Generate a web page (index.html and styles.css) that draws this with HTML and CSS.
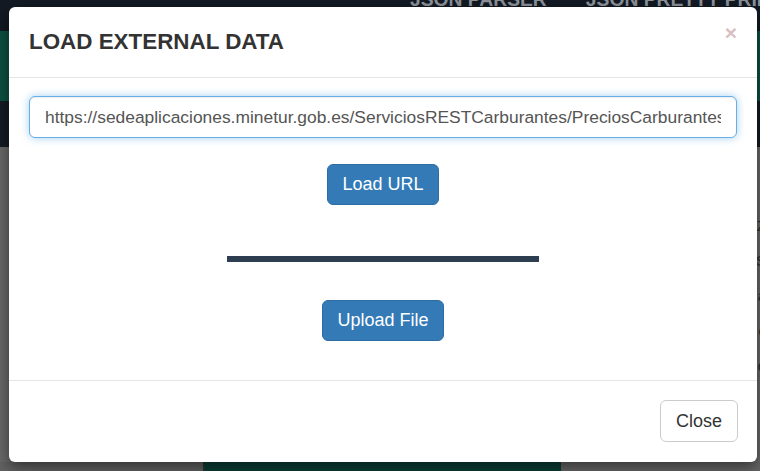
FILE: index.html
```html
<!DOCTYPE html>
<html>
<head>
<meta charset="utf-8">
<link rel="stylesheet" href="styles.css">
</head>
<body>
<div class="page">
  <div class="topbar">
    <span class="nav-item">JSON PARSER</span>
    <span class="nav-item">JSON PRETTY PRINT</span>
  </div>
  <div class="band"></div>
  <div class="darkband"></div>
  <div class="content">
    <div class="side-text">
      <span class="g1">Z</span>
      <span>S</span>
      <span>a</span>
      <span>c</span>
      <span>d</span>
    </div>
    <div class="bottom-row">
      <div class="bottom-left"></div>
      <div class="bottom-green"></div>
      <div class="bottom-right"></div>
    </div>
  </div>
</div>

<div class="modal">
  <div class="modal-header">
    <span class="close">&times;</span>
    <h4 class="modal-title">LOAD EXTERNAL DATA</h4>
  </div>
  <div class="modal-body">
    <input class="url-input" type="text" value="https://sedeaplicaciones.minetur.gob.es/ServiciosRESTCarburantes/PreciosCarburantes/EstacionesTerrestres/">
    <div class="center"><button class="btn btn-primary">Load URL</button></div>
    <div class="sep"></div>
    <div class="center"><button class="btn btn-primary">Upload File</button></div>
  </div>
  <div class="modal-footer">
    <button class="btn btn-default">Close</button>
  </div>
</div>
</body>
</html>
```
FILE: styles.css
```css
* { box-sizing: border-box; }
html, body { margin: 0; padding: 0; }
body {
  width: 760px;
  height: 471px;
  overflow: hidden;
  font-family: "Liberation Sans", Arial, sans-serif;
  background: #686868;
  position: relative;
}
.page {
  display: flex;
  flex-direction: column;
  height: 471px;
}
.topbar {
  height: 31px;
  background: #131a23;
  display: flex;
  gap: 39px;
  padding-left: 410px;
  overflow: hidden;
  white-space: nowrap;
}
.nav-item {
  flex: none;
  color: #8e949b;
  font-weight: bold;
  font-size: 19.3px;
  line-height: 19px;
  margin-top: -10px;
}
.band {
  height: 70px;
  background: #0c5140;
}
.darkband {
  height: 46px;
  background: #141b24;
}
.content {
  flex: 1;
  background: #696969;
  display: flex;
  flex-direction: column;
  justify-content: space-between;
  position: relative;
}
.side-text {
  display: flex;
  flex-direction: column;
  align-items: flex-end;
  gap: 18px;
  padding-top: 70px;
  font-size: 15px;
  color: #2b2b2b;
  margin-right: -6px;
}
.side-text .g1 { color: #1d3b24; }
.bottom-row {
  display: flex;
  height: 9px;
}
.bottom-left { width: 204px; background: #626262; border-right: 1px solid #333; }
.bottom-green { width: 357px; background: #0a3f35; }
.bottom-right { flex: 1; background: #666; }

.modal {
  position: absolute;
  left: 9px;
  top: 7px;
  width: 748px;
  background: #fff;
  border-radius: 6px;
  box-shadow: 0 5px 15px rgba(0,0,0,.5);
}
.modal-header {
  height: 71px;
  padding: 20px;
  border-bottom: 1px solid #e5e5e5;
}
.modal-title {
  margin: 0;
  font-size: 22.4px;
  line-height: 30px;
  font-weight: bold;
  color: #333;
}
.close {
  float: right;
  font-size: 21px;
  font-weight: bold;
  line-height: 1;
  color: #c9a3a9;
  opacity: .7;
  margin-top: -5px;
  margin-right: 0;
}
.modal-body {
  height: 302px;
  padding: 18px 20px;
}
.url-input {
  display: block;
  width: 100%;
  height: 42px;
  padding: 6px 15px;
  font-family: "Liberation Sans", Arial, sans-serif;
  font-size: 17.4px;
  color: #555;
  background: #fff;
  border: 1px solid #66afe9;
  border-radius: 6px;
  outline: 0;
  box-shadow: inset 0 1px 1px rgba(0,0,0,.075), 0 0 8px rgba(102,175,233,.6);
}
.modal-body .center { margin-top: 26px; }
.center {
  display: flex;
  justify-content: center;
}
.btn {
  font-family: "Liberation Sans", Arial, sans-serif;
  font-size: 18px;
  line-height: 25px;
  padding: 7px 14px;
  border-radius: 6px;
  border: 1px solid transparent;
}
.btn-primary {
  color: #fff;
  background: #337ab7;
  border-color: #2e6da4;
}
.btn-default {
  color: #333;
  background: #fff;
  border-color: #ccc;
  padding: 7px 15px;
  height: 42px;
}
.sep {
  width: 312px;
  height: 6px;
  background: #2c3e50;
  margin: 51px auto 38px;
}
.modal-body .sep + .center { margin-top: 0; }
.modal-footer {
  height: 82px;
  padding: 19px;
  border-top: 1px solid #e5e5e5;
  display: flex;
  justify-content: flex-end;
  align-items: flex-start;
}
```
